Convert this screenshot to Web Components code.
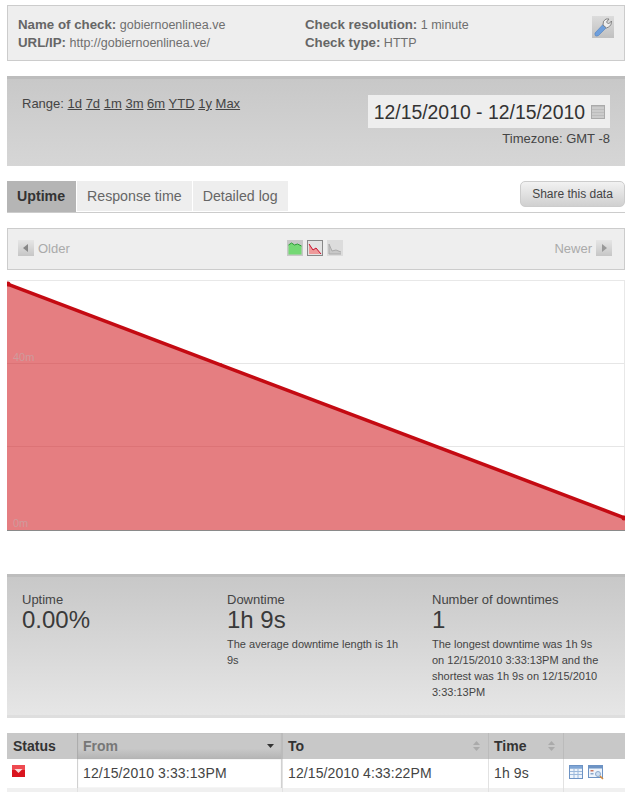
<!DOCTYPE html>
<html>
<head>
<meta charset="utf-8">
<style>
  html, body { margin: 0; padding: 0; background: #fff; overflow: hidden; }
  body { width: 618px; height: 792px; padding-left: 7px; font-family: "Liberation Sans", Arial, sans-serif; color: #444; }
</style>
</head>
<body>
<check-info></check-info>
<range-panel></range-panel>
<tab-bar></tab-bar>
<chart-nav></chart-nav>
<uptime-chart></uptime-chart>
<stats-panel></stats-panel>
<log-table></log-table>

<script>
class CheckInfo extends HTMLElement {
  constructor() {
    super();
    this.attachShadow({ mode: "open" });
    this.shadowRoot.innerHTML = `
      <style>
        :host {
          display: grid;
          grid-template-columns: 287px 1fr 32px;
          box-sizing: border-box;
          height: 56px;
          margin-top: 5px;
          padding: 10px 0 0 10px;
          background: #eee;
          border: 1px solid #ccc;
          font-size: 12.5px;
          line-height: 17px;
          color: #6f6f6f;
        }
        b { color: #666; font-size: 13.3px; }
        .tool {
          width: 22px; height: 22px;
          background: linear-gradient(#dcdcdc, #c0c0c0);
        }
      </style>
      <div><b>Name of check:</b> gobiernoenlinea.ve<br><b>URL/IP:</b> http://gobiernoenlinea.ve/</div>
      <div><b>Check resolution:</b> 1 minute<br><b>Check type:</b> HTTP</div>
      <svg class="tool" viewBox="0 0 22 22">
        <path d="M3 17 L11 8.500 L14.500 11.500 L6.500 19.500 Q2.500 21.500 3 17Z" fill="#6e9fdc" stroke="#4f7fc0" stroke-width=".6"/>
        <path d="M11 9 Q10.500 4.500 14 3 L17 3 L14.500 6 L16.500 8 L19.500 5 Q20 9.500 16.500 11 L14.500 12Z" fill="#eee" stroke="#777" stroke-width=".9"/>
      </svg>
    `;
  }
}

class RangePanel extends HTMLElement {
  constructor() {
    super();
    this.attachShadow({ mode: "open" });
    this.shadowRoot.innerHTML = `
      <style>
        :host {
          display: flex;
          justify-content: space-between;
          box-sizing: border-box;
          height: 90px;
          margin-top: 15px;
          padding: 16px 15px 0 15px;
          background: linear-gradient(#c8c8c8, #d6d6d6);
          border-top: 3px solid #bdbdbd;
          font-size: 13px;
          line-height: 16px;
          color: #444;
        }
        a { color: #444; text-decoration: underline; }
        .links { margin-top: 1px; }
        .right { display: flex; flex-direction: column; align-items: flex-end; }
        .dates {
          display: flex;
          align-items: center;
          gap: 6px;
          box-sizing: border-box;
          height: 33px;
          padding: 0 5px 0 6px;
          background: #eee;
          font-size: 19.4px;
          color: #333;
        }
        .cal {
          box-sizing: border-box;
          width: 14px; height: 14px;
          border: 1px solid #aaa;
          background: repeating-linear-gradient(#bdbdbd 0 1px, #cbcbcb 1px 3px);
        }
        .tz { margin-top: 3px; color: #444; }
      </style>
      <div class="links">Range: <a>1d</a> <a>7d</a> <a>1m</a> <a>3m</a> <a>6m</a> <a>YTD</a> <a>1y</a> <a>Max</a></div>
      <div class="right">
        <div class="dates">12/15/2010 - 12/15/2010 <span class="cal"></span></div>
        <div class="tz">Timezone: GMT -8</div>
      </div>
    `;
  }
}

class TabBar extends HTMLElement {
  constructor() {
    super();
    this.attachShadow({ mode: "open" });
    this.shadowRoot.innerHTML = `
      <style>
        :host {
          display: flex;
          box-sizing: border-box;
          height: 32px;
          margin-top: 15px;
          border-bottom: 1px solid #ccc;
          font-size: 14.2px;
          line-height: 30px;
        }
        .tab {
          height: 30px;
          padding: 0 10px;
          margin-right: 1px;
          background: #eee;
          color: #666;
        }
        .on {
          height: 31px;
          width: 49px;
          padding: 0 10px;
          background: #b5b5b5;
          color: #333;
          font-weight: bold;
        }
        button {
          margin-left: auto;
          box-sizing: border-box;
          width: 105px; height: 26px;
          padding: 0;
          border: 1px solid #ccc;
          border-radius: 5px;
          background: linear-gradient(#f2f2f2, #d0d0d0);
          font: 12px "Liberation Sans", Arial, sans-serif;
          color: #444;
        }
      </style>
      <div class="tab on">Uptime</div>
      <div class="tab">Response time</div>
      <div class="tab">Detailed log</div>
      <button>Share this data</button>
    `;
  }
}

class ChartNav extends HTMLElement {
  constructor() {
    super();
    this.attachShadow({ mode: "open" });
    this.shadowRoot.innerHTML = `
      <style>
        :host {
          display: grid;
          grid-template-columns: 1fr auto 1fr;
          align-items: center;
          box-sizing: border-box;
          height: 42px;
          margin-top: 15px;
          padding: 0 12px 0 10px;
          background: #eee;
          border: 1px solid #ccc;
          font-size: 13px;
          color: #aaa;
        }
        .side { display: flex; align-items: center; gap: 4px; margin-top: -2px; }
        .side.r { justify-content: flex-end; }
        .arrow {
          display: flex; align-items: center; justify-content: center;
          width: 16px; height: 16px;
          background: linear-gradient(#e6e6e6, #c6c6c6);
        }
        .modes { display: flex; gap: 4px; margin-left: -1px; margin-top: -2px; }
        svg.mode { display: block; width: 16px; height: 16px; }
      </style>
      <div class="side">
        <span class="arrow"><svg width="6" height="8" viewBox="0 0 6 8"><path d="M5 0v8L0 4z" fill="#888"/></svg></span>
        Older
      </div>
      <div class="modes">
        <svg class="mode" viewBox="0 0 16 16"><rect width="16" height="16" fill="#c8c8c8"/><path d="M1.500 14.500V5l3-2 3 2 3-1 4 2v8.500z" fill="#74d874"/><path d="M1.500 5l3-2 3 2 3-1 4 2" fill="none" stroke="#2f9a3a"/></svg>
        <svg class="mode" viewBox="0 0 16 16"><rect x=".5" y=".5" width="15" height="15" fill="#e3e3e3" stroke="#888"/><path d="M2 14V4l4 6 3-2 5 6z" fill="#ee9a9a"/><path d="M2 4l4 6 3-2 5 6" fill="none" stroke="#c8102e"/></svg>
        <svg class="mode" viewBox="0 0 16 16"><rect width="16" height="16" fill="#dcdcdc"/><path d="M2 14V4l3 7 4-1 5 2v2z" fill="#c8c8c8"/><path d="M2 4v10h12M2 4l3 7 4-1 5 2" fill="none" stroke="#aaa"/></svg>
      </div>
      <div class="side r">
        Newer
        <span class="arrow"><svg width="6" height="8" viewBox="0 0 6 8"><path d="M1 0v8l5-4z" fill="#999"/></svg></span>
      </div>
    `;
  }
}

class UptimeChart extends HTMLElement {
  constructor() {
    super();
    this.attachShadow({ mode: "open" });
    this.shadowRoot.innerHTML = `
      <style>
        :host { display: block; height: 251px; margin-top: 10px; }
        svg { display: block; }
        text { font: 11px "Liberation Sans", Arial, sans-serif; fill: #cf9a9c; }
      </style>
      <svg width="618" height="251" viewBox="0 0 618 251">
        <rect x=".5" y=".5" width="617" height="250" fill="#fff" stroke="#e8e8e8"/>
        <path d="M1 83.500H617M1 166.500H617" stroke="#e6e6e6"/>
        <path d="M0 4L618 238V250H0Z" fill="#e57e81"/>
        <path d="M0 83.500H215M0 166.500H432" stroke="#dc7376"/>
        <path d="M0 4L618 238" stroke="#c40a12" stroke-width="3.500" fill="none"/>
        <circle cx="1" cy="4" r="2.500" fill="#c40a12"/>
        <circle cx="617" cy="238" r="2.500" fill="#c40a12"/>
        <path d="M0 250.500H618" stroke="#8a8a8a"/>
        <text x="6" y="81">40m</text>
        <text x="6" y="247">0m</text>
      </svg>
    `;
  }
}

class StatBlock extends HTMLElement {
  constructor() {
    super();
    this.attachShadow({ mode: "open" });
    this.shadowRoot.innerHTML = `
      <style>
        :host { display: block; color: #444; }
        .label { font-size: 13px; line-height: 16px; }
        .value { font-size: 24px; line-height: 24px; color: #3a3a3a; }
        .note { margin-top: 4px; max-width: 172px; font-size: 11px; line-height: 16px; color: #444; }
      </style>
      <div class="label"><slot name="label"></slot></div>
      <div class="value"><slot name="value"></slot></div>
      <div class="note"><slot name="note"></slot></div>
    `;
  }
}

class StatsPanel extends HTMLElement {
  constructor() {
    super();
    this.attachShadow({ mode: "open" });
    this.shadowRoot.innerHTML = `
      <style>
        :host {
          display: grid;
          grid-template-columns: 205px 205px 178px;
          box-sizing: border-box;
          height: 144px;
          margin-top: 43px;
          padding: 15px 0 0 15px;
          background: linear-gradient(#c8c8c8, #e6e6e6);
          border-top: 3px solid #bdbdbd;
          border-bottom: 3px solid #dedede;
        }
      </style>
      <stat-block>
        <span slot="label">Uptime</span><span slot="value">0.00%</span>
      </stat-block>
      <stat-block>
        <span slot="label">Downtime</span><span slot="value">1h 9s</span>
        <span slot="note">The average downtime length is 1h 9s</span>
      </stat-block>
      <stat-block>
        <span slot="label">Number of downtimes</span><span slot="value">1</span>
        <span slot="note">The longest downtime was 1h 9s on 12/15/2010 3:33:13PM and the shortest was 1h 9s on 12/15/2010 3:33:13PM</span>
      </stat-block>
    `;
  }
}

class LogTable extends HTMLElement {
  constructor() {
    super();
    this.attachShadow({ mode: "open" });
    const sortBoth = `<svg class="sort" width="7" height="10" viewBox="0 0 7 10"><path d="M0 4l3.500-4L7 4zM0 6h7l-3.500 4z" fill="#aaa"/></svg>`;
    this.shadowRoot.innerHTML = `
      <style>
        :host {
          display: grid;
          grid-template-columns: 70px 205px 206px 75px 62px;
          grid-template-rows: 26px 29px 4px;
          margin-top: 15px;
          font-size: 14px;
        }
        .h {
          display: flex;
          align-items: center;
          justify-content: space-between;
          padding: 0 8px 0 6px;
          background: #c8c8c8;
          font-weight: bold;
          color: #333;
          box-shadow: inset 1px 0 0 #bbb;
        }
        .h.status { box-shadow: none; }
        .h.from {
          color: #777;
          background: linear-gradient(#c8c8c8 60%, #b4b4b4);
          box-shadow: inset 1px 0 1px #aaa, inset -1px 0 1px #bbb;
        }
        .c {
          display: flex;
          align-items: center;
          padding: 0 6px 1px;
          background: #fff;
          color: #444;
          letter-spacing: .1px;
          box-shadow: inset 1px 0 0 #e2e2e2;
        }
        .c.status { box-shadow: none; padding: 0 5px 6px; }
        .c.from { box-shadow: inset 1px 0 1px #ccc, inset -1px 0 1px #ccc; }
        .c.icons { gap: 5px; padding-bottom: 3px; }
        .s { background: #f0f0f0; box-shadow: inset 1px 0 0 #e2e2e2; }
        .s.first { box-shadow: none; }
        .flag { display: block; }
      </style>
      <div class="h status">Status</div>
      <div class="h from">From <svg width="7" height="4" viewBox="0 0 7 4"><path d="M0 0h7L3.500 4z" fill="#333"/></svg></div>
      <div class="h">To ${sortBoth}</div>
      <div class="h">Time ${sortBoth}</div>
      <div class="h"></div>

      <div class="c status">
        <svg class="flag" width="13" height="12" viewBox="0 0 13 12"><rect width="13" height="12" fill="#d9141e"/><rect width="13" height="5" fill="#ee4a50"/><path d="M2.500 4h8L6.500 8z" fill="#fbdada"/></svg>
      </div>
      <div class="c from">12/15/2010 3:33:13PM</div>
      <div class="c">12/15/2010 4:33:22PM</div>
      <div class="c">1h 9s</div>
      <div class="c icons">
        <svg width="14" height="14" viewBox="0 0 14 14"><rect x=".5" y=".5" width="13" height="13" fill="#eef4fb" stroke="#6d93c4"/><path d="M1 3.500H13M1 6.500H13M1 9.500H13M5 1V13M9 1V13" stroke="#9cb9dc"/><rect x="1" y="1" width="12" height="2" fill="#7fa6d6"/></svg>
        <svg width="17" height="15" viewBox="0 0 17 15"><rect x=".5" y=".5" width="14" height="12" fill="#eef4fb" stroke="#6d93c4"/><rect x="1" y="1" width="13" height="2.500" fill="#6d93c4"/><rect x="2.500" y="5" width="3" height="1.500" fill="#c9745f"/><rect x="2.500" y="8" width="3" height="1.500" fill="#8aa8cc"/><circle cx="10" cy="9" r="2.500" fill="#cfe0f2" stroke="#8aa8cc"/><path d="M12 11l3 3" stroke="#d58a3a" stroke-width="1.500"/></svg>
      </div>

      <div class="s first"></div><div class="s"></div><div class="s"></div><div class="s"></div><div class="s"></div>
    `;
  }
}

customElements.define("check-info", CheckInfo);
customElements.define("range-panel", RangePanel);
customElements.define("tab-bar", TabBar);
customElements.define("chart-nav", ChartNav);
customElements.define("uptime-chart", UptimeChart);
customElements.define("stat-block", StatBlock);
customElements.define("stats-panel", StatsPanel);
customElements.define("log-table", LogTable);
</script>
</body>
</html>
